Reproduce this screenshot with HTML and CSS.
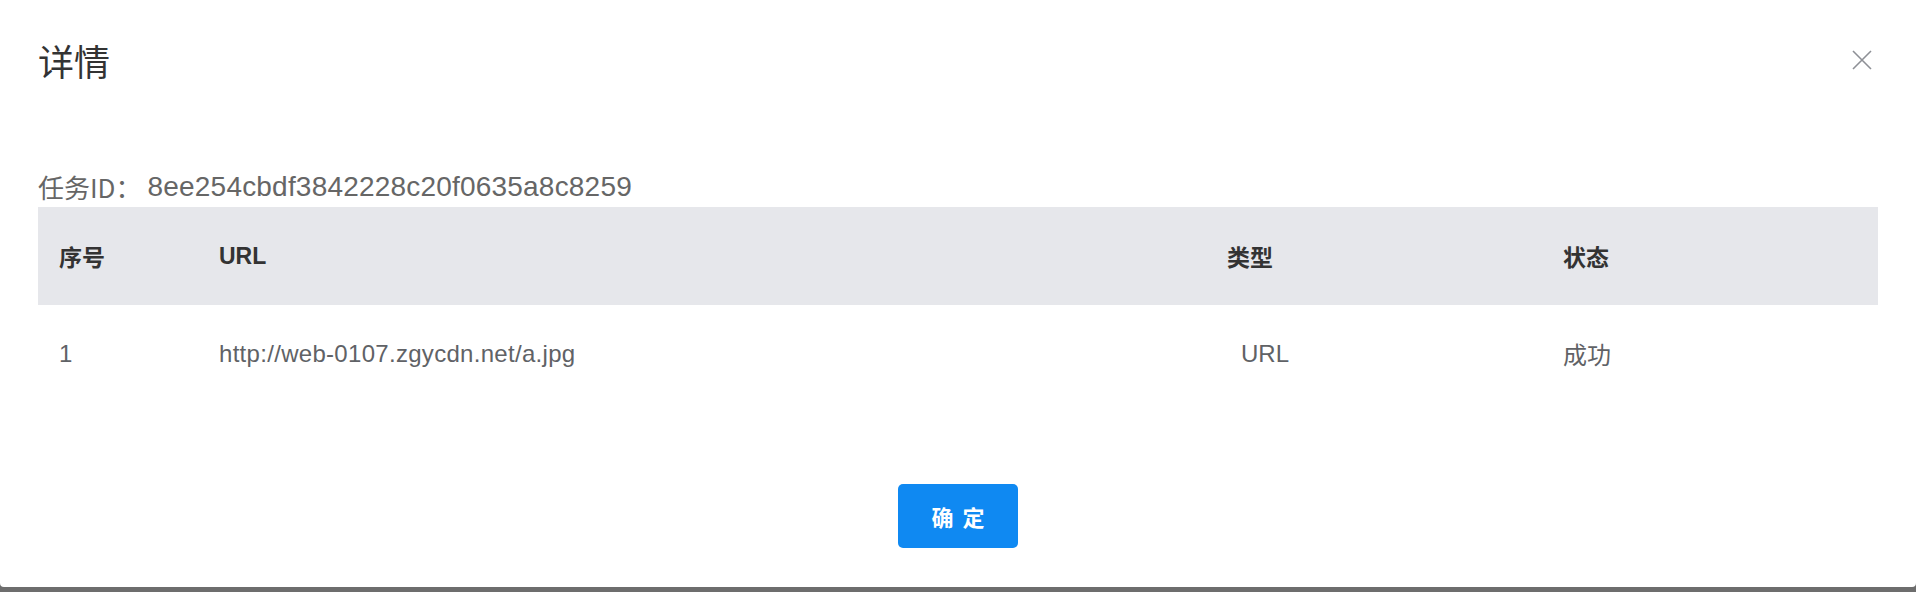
FILE: index.html
```html
<!DOCTYPE html>
<html lang="zh-CN">
<head>
<meta charset="utf-8">
<title>详情</title>
<link rel="stylesheet" href="styles.css">
</head>
<body>
<div class="page">
  <div class="modal">
    <div class="modal-header">
      <div class="modal-title">详情</div>
      <button class="close-btn" aria-label="关闭">
        <svg width="20" height="20" viewBox="0 0 20 20"><path d="M1 1L19 19M19 1L1 19" stroke="#8e9096" stroke-width="1.6" fill="none"/></svg>
      </button>
    </div>
    <div class="modal-body">
      <div class="task-line"><span class="task-label">任务ID：</span><span class="task-id">8ee254cbdf3842228c20f0635a8c8259</span></div>
      <div class="table">
        <div class="thead">
          <div class="cell c1">序号</div>
          <div class="cell c2">URL</div>
          <div class="cell c3">类型</div>
          <div class="cell c4">状态</div>
        </div>
        <div class="trow">
          <div class="cell c1 num">1</div>
          <div class="cell c2 url">http://web-0107.zgycdn.net/a.jpg</div>
          <div class="cell c3 type">URL</div>
          <div class="cell c4">成功</div>
        </div>
      </div>
    </div>
    <div class="modal-footer">
      <button class="ok-btn">确 定</button>
    </div>
  </div>
  <div class="overlay-strip"></div>
</div>
</body>
</html>
```

FILE: styles.css
```css
html, body {
  margin: 0;
  padding: 0;
  background: #6d6d6d;
}
body {
  font-family: "Liberation Sans", "Noto Sans CJK SC", sans-serif;
  color: #333;
}
.page {
  width: 1916px;
  height: 592px;
  display: flex;
  flex-direction: column;
}
.modal {
  height: 587px;
  background: #fff;
  border-radius: 0 0 4px 4px;
  display: flex;
  flex-direction: column;
}
.overlay-strip {
  flex: 1;
  background: #6d6d6d;
}
.modal-header {
  height: 120px;
  display: flex;
  align-items: center;
  justify-content: space-between;
  padding: 0 44px 0 38px;
}
.modal-title {
  font-size: 36px;
  line-height: 40px;
  color: #333;
  font-family: "Noto Sans CJK SC", sans-serif;
}
.close-btn {
  border: 0;
  background: none;
  padding: 0;
  width: 20px;
  height: 20px;
  display: flex;
}
.modal-body {
  padding: 46px 38px 0 38px;
}
.task-line {
  height: 41px;
  line-height: 41px;
  font-size: 28px;
  color: #666;
  display: flex;
}
.task-label {
  font-family: "Noto Sans CJK SC", sans-serif;
  font-size: 26px;
}
.task-id {
  margin-left: 6px;
  letter-spacing: 0.2px;
}
.table {
  display: flex;
  flex-direction: column;
}
.thead, .trow {
  display: grid;
  grid-template-columns: 160px 1008px 336px 336px;
  align-items: center;
}
.thead {
  height: 98px;
  background: #e6e7eb;
  font-weight: bold;
  font-size: 23px;
  color: #333;
}
.trow {
  height: 94px;
  padding-top: 3px;
  box-sizing: border-box;
  font-size: 24px;
  color: #606266;
}
.cell {
  padding-left: 21px;
}
.url {
  letter-spacing: 0.3px;
}
.type {
  padding-left: 35px;
}
.modal-footer {
  display: flex;
  justify-content: center;
  padding-top: 85px;
}
.ok-btn {
  width: 120px;
  height: 64px;
  border: 0;
  border-radius: 5px;
  background: #0f89f2;
  color: #fff;
  font-family: "Noto Sans CJK SC", sans-serif;
  font-weight: bold;
  font-size: 22px;
  letter-spacing: 2px;
  padding: 0 0 0 2px;
}
```
